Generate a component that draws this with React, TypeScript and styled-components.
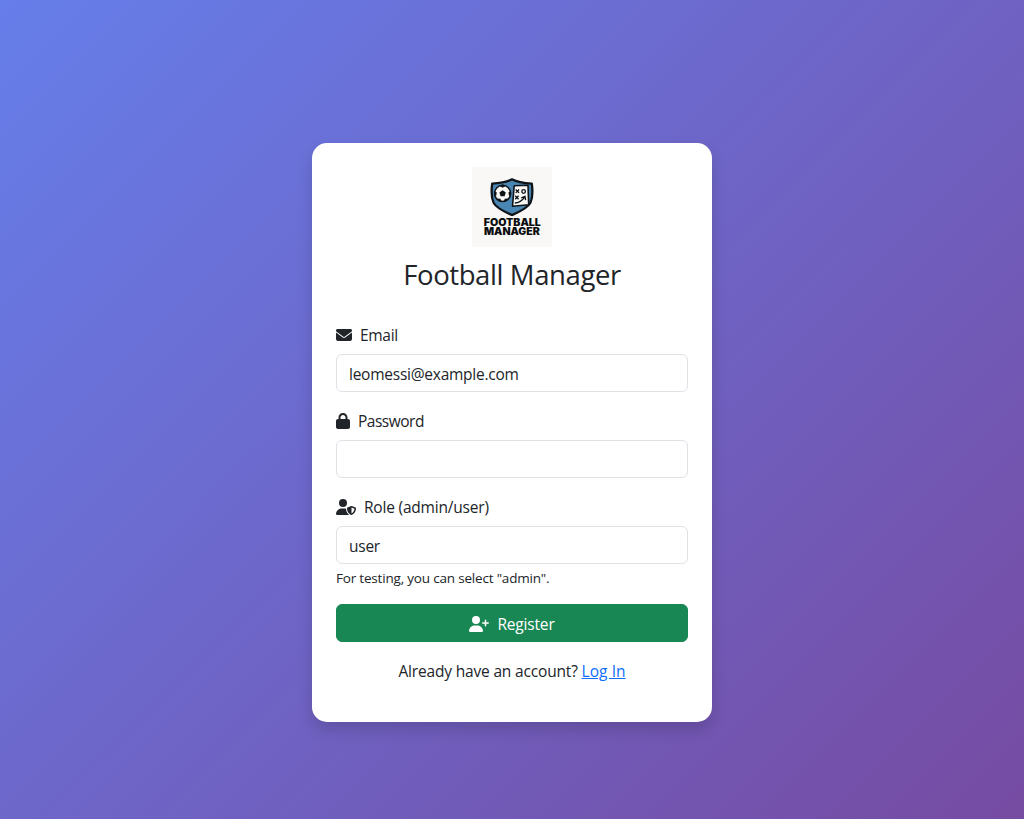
import React from 'react';
import styled, { createGlobalStyle } from 'styled-components';
import { FaEnvelope, FaLock, FaUserPlus, FaUserShield } from 'react-icons/fa6';

const GlobalStyle = createGlobalStyle`
  *, *::before, *::after { box-sizing: border-box; }
  body {
    margin: 0;
    font-family: 'Segoe UI', 'Open Sans', 'Noto Sans', sans-serif;
    font-size: 15.5px;
    line-height: 24px;
    color: #212529;
  }
`;

const Page = styled.main`
  min-height: 100vh;
  display: flex;
  align-items: center;
  justify-content: center;
  padding-top: 46px;
  background: linear-gradient(135deg, #667eea 0%, #764ba2 100%);
`;

const Card = styled.form`
  width: 400px;
  height: 579px;
  padding: 24px;
  border-radius: 15px;
  background: #fff;
  box-shadow: 0 8px 16px rgba(0, 0, 0, 0.15);
`;

const Header = styled.header`
  display: flex;
  flex-direction: column;
  align-items: center;
  margin-bottom: 30px;
`;

const Title = styled.h3`
  margin: 11px 0 0;
  font-size: 27.5px;
  font-weight: 400;
  line-height: 34px;
  letter-spacing: -0.4px;
  white-space: nowrap;
`;

const Field = styled.div`
  display: flex;
  flex-direction: column;
  margin-bottom: 16px;
`;

const Label = styled.label<{ $iconWidth: number; $tracking?: number }>`
  display: flex;
  align-items: center;
  gap: 8px;
  height: 24px;
  padding-top: 2px;
  margin-bottom: 8px;
  letter-spacing: ${(p) => p.$tracking ?? 0}px;

  svg {
    flex: none;
    width: ${(p) => p.$iconWidth}px;
    height: 16px;
  }
`;

const Input = styled.input`
  height: 38px;
  padding: 8px 12px 6px;
  border: 1px solid #dee2e6;
  border-radius: 6px;
  background: #fff;
  color: #212529;
  font: inherit;
  letter-spacing: -0.25px;
  outline: none;
`;

const Hint = styled.small`
  margin-top: 4px;
  font-size: 13.5px;
  line-height: 20px;
  letter-spacing: -0.19px;
`;

const Submit = styled.button`
  display: flex;
  align-items: center;
  justify-content: center;
  gap: 8px;
  width: 100%;
  height: 38px;
  padding: 2px 0 0;
  border: 1px solid #198754;
  border-radius: 6px;
  background: #198754;
  color: #fff;
  font: inherit;
  letter-spacing: -0.18px;

  svg { height: 16px; width: 20px; }
`;

const Footer = styled.p`
  margin: 17px 0 0;
  text-align: center;
  white-space: nowrap;
  letter-spacing: -0.17px;
`;

const Link = styled.a`
  color: #0d6efd;
  text-decoration: underline;
  letter-spacing: 0.05px;
`;

const Logo = () => (
  <svg width="80" height="80" viewBox="0 0 80 80" role="img" aria-label="Football Manager logo">
    <rect width="80" height="80" fill="#f9f8f6" />
    <path
      d="M40 12.3C34 15.6 27.5 16.2 20.2 16.6C19.2 24 18.8 30 21.7 36C25 41.8 33 45 40 48C47 45 55 41.8 58.3 36C61.2 30 60.8 24 59.8 16.6C52.5 16.2 46 15.6 40 12.3Z"
      fill="#4a86b4" stroke="#0e1418" strokeWidth="2.3" strokeLinejoin="round"
    />
    <g transform="translate(-.4 -.4)">
      <circle cx="31" cy="26.8" r="8.1" fill="#faf9f6" stroke="#0e1418" strokeWidth="1.5" />
      <g fill="#0e1418">
        <path d="M31 23.6L34.2 26L33 29.6H29L27.8 26Z" />
        <path d="M27.4 19.2L31 21.2L34.6 19.2L31 18Z" />
        <path d="M39.2 23.8L36.8 26L37.6 29.8L39.4 28Z" />
        <path d="M22.8 23.8L25.2 26L24.4 29.8L22.6 28Z" />
        <path d="M25.8 31.8L28.8 32.2L30 35.2L27 34.4Z" />
        <path d="M36.2 31.8L33.2 32.2L32 35.2L35 34.4Z" />
      </g>
    </g>
    <path d="M42.2 18.8L56 18.2L56.7 37.8L40.5 39.2Z" fill="#faf9f6" stroke="#0e1418" strokeWidth="1.6" strokeLinejoin="round" />
    <g fill="none" stroke="#0e1418" strokeWidth="1.3">
      <path d="M43.7 22.5L47.1 25.9M47.1 22.5L43.7 25.9M43.2 28.8L46.6 32.2M46.6 28.8L43.2 32.2" />
      <circle cx="51.6" cy="24.5" r="1.8" />
      <path d="M42.8 36C47.5 35.8 50 34 52.4 30.4M49.2 30.8L53 29.4L53.6 33.2" />
    </g>
    <g fill="#0b0d0e" fontFamily="Inter, sans-serif" fontWeight="900" fontSize="9.8">
      <text x="11.8" y="58.8" textLength="57" lengthAdjust="spacingAndGlyphs">FOOTBALL</text>
      <text x="12" y="68" textLength="55.8" lengthAdjust="spacingAndGlyphs">MANAGER</text>
    </g>
  </svg>
);

export default function App() {
  return (
    <>
      <GlobalStyle />
      <Page>
        <Card onSubmit={(e) => e.preventDefault()}>
          <Header>
            <Logo />
            <Title>Football Manager</Title>
          </Header>
          <Field>
            <Label htmlFor="email" $iconWidth={16} $tracking={-0.3}><FaEnvelope />Email</Label>
            <Input id="email" type="email" defaultValue="leomessi@example.com" />
          </Field>
          <Field>
            <Label htmlFor="password" $iconWidth={14} $tracking={-0.5}><FaLock />Password</Label>
            <Input id="password" type="password" />
          </Field>
          <Field>
            <Label htmlFor="role" $iconWidth={20} $tracking={-0.2}><FaUserShield />Role (admin/user)</Label>
            <Input id="role" type="text" defaultValue="user" />
            <Hint>For testing, you can select "admin".</Hint>
          </Field>
          <Submit type="submit"><FaUserPlus />Register</Submit>
          <Footer>Already have an account? <Link href="#">Log In</Link></Footer>
        </Card>
      </Page>
    </>
  );
}
